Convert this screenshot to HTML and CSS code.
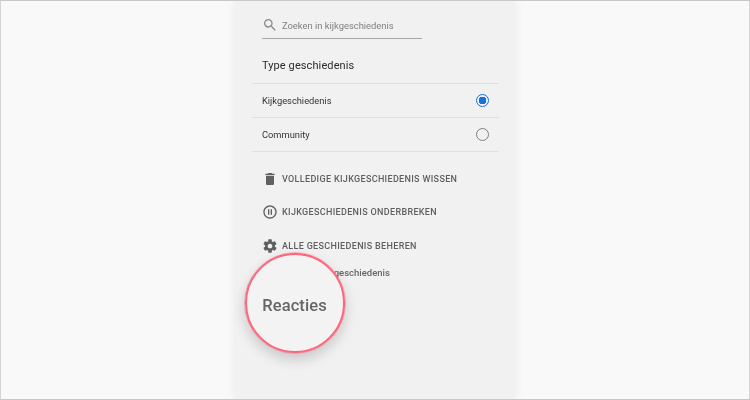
FILE: index.html
```html
<!DOCTYPE html>
<html lang="nl">
<head>
<meta charset="utf-8">
<title>Kijkgeschiedenis</title>
<link rel="stylesheet" href="styles.css">
</head>
<body>
<div class="frame">
  <main class="panel">
    <div class="search">
      <svg class="search-icon" viewBox="0 0 24 24" width="16" height="16"><path fill="#8a8a8a" d="M15.5 14h-.79l-.28-.27A6.47 6.47 0 0 0 16 9.5 6.5 6.5 0 1 0 9.5 16c1.61 0 3.09-.59 4.23-1.57l.27.28v.79l5 4.99L20.49 19l-4.99-5zm-6 0C7.01 14 5 11.99 5 9.5S7.01 5 9.5 5 14 7.01 14 9.5 11.99 14 9.5 14z"/></svg>
      <span class="search-text">Zoeken in kijkgeschiedenis</span>
    </div>
    <h2 class="section-title">Type geschiedenis</h2>
    <div class="radio-list">
      <div class="radio-row"><span>Kijkgeschiedenis</span><span class="radio radio-on"></span></div>
      <div class="radio-row"><span>Community</span><span class="radio"></span></div>
    </div>
    <div class="actions">
      <div class="action">
        <svg viewBox="0 0 24 24" width="16" height="16"><path fill="#606060" d="M6 19c0 1.1.9 2 2 2h8c1.100 0 2-.9 2-2V7H6v12zM19 4h-3.500l-1-1h-5l-1 1H5v2h14V4z"/></svg>
        <span>VOLLEDIGE KIJKGESCHIEDENIS WISSEN</span>
      </div>
      <div class="action">
        <svg viewBox="0 0 24 24" width="16" height="16"><path fill="#606060" d="M9 16h2V8H9v8zm3-14C6.480 2 2 6.480 2 12s4.480 10 10 10 10-4.480 10-10S17.520 2 12 2zm0 18c-4.410 0-8-3.590-8-8s3.590-8 8-8 8 3.590 8 8-3.590 8-8 8zm1-4h2V8h-2v8z"/></svg>
        <span>KIJKGESCHIEDENIS ONDERBREKEN</span>
      </div>
      <div class="action">
        <svg viewBox="0 0 24 24" width="16" height="16"><path fill="#606060" d="M19.430 12.980c.04-.32.070-.64.070-.98s-.03-.66-.07-.98l2.110-1.650c.19-.15.240-.42.120-.64l-2-3.460c-.12-.22-.39-.30-.61-.22l-2.490 1c-.52-.40-1.080-.73-1.690-.98l-.38-2.650A.488.488 0 0 0 14 2h-4c-.25 0-.46.180-.49.420l-.38 2.650c-.61.250-1.170.59-1.690.98l-2.490-1c-.23-.09-.49 0-.61.220l-2 3.460c-.13.220-.07.490.12.640l2.110 1.650c-.04.320-.07.650-.07.980s.03.660.07.980l-2.110 1.650c-.19.150-.24.420-.12.640l2 3.460c.12.220.39.300.61.220l2.490-1c.52.400 1.080.730 1.690.980l.38 2.650c.03.240.24.420.49.420h4c.25 0 .46-.18.49-.42l.38-2.650c.61-.25 1.170-.59 1.690-.98l2.490 1c.23.090.49 0 .61-.22l2-3.460c.12-.22.070-.49-.12-.64l-2.110-1.650zM12 15.500c-1.930 0-3.500-1.570-3.500-3.500s1.570-3.500 3.500-3.500 3.500 1.570 3.500 3.500-1.570 3.500-3.500 3.500z"/></svg>
        <span>ALLE GESCHIEDENIS BEHEREN</span>
      </div>
    </div>
    <p class="sublink">Mijn community-geschiedenis</p>
    <div class="lens">Reacties</div>
  </main>
</div>
</body>
</html>
```
FILE: styles.css
```css
* { box-sizing: border-box; }
html, body { margin: 0; padding: 0; }
body {
  width: 750px;
  height: 400px;
  overflow: hidden;
  font-family: Roboto, "Liberation Sans", sans-serif;
  background: #fff;
}
.frame {
  width: 750px;
  height: 400px;
  border: 1px solid #d4d4d4;
  border-top-color: #c8c8c8;
  border-bottom-color: #c8c8c8;
  background: #f9f9f9;
  display: flex;
  justify-content: center;
  overflow: hidden;
}
.panel {
  position: relative;
  width: 280px;
  height: 100%;
  padding: 0 16px 0 17px;
  background: #f1f1f1;
  box-shadow: 0 0 10px rgba(0, 0, 0, 0.07);
  filter: blur(0.25px);
}
.search {
  width: 160px;
  height: 38px;
  margin-left: 10px;
  padding-top: 16px;
  display: flex;
  align-items: flex-start;
  gap: 4px;
  border-bottom: 1px solid #a6a6a6;
}
.search-icon { flex: none; }
.search-text { font-size: 9.4px; line-height: 17px; color: #808080; }
.section-title {
  margin: 0;
  padding: 8px 0 0 10px;
  height: 45px;
  display: flex;
  align-items: center;
  font-size: 11px;
  font-weight: 400;
  letter-spacing: 0.1px;
  color: #2b2b2b;
  border-bottom: 1px solid #e0e0e0;
}
.radio-row {
  height: 34px;
  padding: 0 10px;
  display: flex;
  align-items: center;
  justify-content: space-between;
  font-size: 9.3px;
  color: #333;
  border-bottom: 1px solid #e0e0e0;
}
.radio {
  width: 13px;
  height: 13px;
  border-radius: 50%;
  border: 1px solid #7f7f7f;
}
.radio-on {
  border-color: #1a6fdc;
  border-width: 1.5px;
  background: radial-gradient(circle, #1a6fdc 0, #1a6fdc 3.6px, transparent 4px);
}
.actions { padding: 10px 0 0 10px; }
.action {
  height: 33.5px;
  display: flex;
  align-items: center;
  gap: 4px;
  font-size: 9px;
  font-weight: 500;
  letter-spacing: 0.33px;
  color: #5f5f5f;
}
.sublink {
  margin: 4px 0 0 10px;
  font-size: 9.5px;
  line-height: 12px;
  font-weight: 500;
  color: #666;
}
.lens {
  position: absolute;
  left: 9.5px;
  top: 251.5px;
  width: 100px;
  height: 100px;
  padding-top: 5px;
  border-radius: 50%;
  background: #f3f3f3;
  border: 2px solid #fd667d;
  outline: 1.5px solid rgba(253, 102, 125, 0.45);
  box-shadow: 0 6px 14px rgba(0, 0, 0, 0.18);
  display: flex;
  align-items: center;
  justify-content: center;
  font-size: 16.5px;
  font-weight: 500;
  letter-spacing: 0.1px;
  color: #666;
}
```
